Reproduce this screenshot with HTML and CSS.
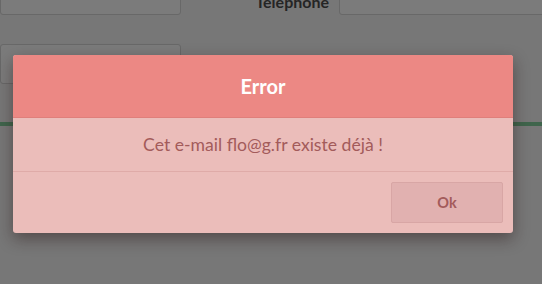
FILE: index.html
```html
<!DOCTYPE html>
<html lang="fr">
<head>
<meta charset="utf-8">
<title>Error</title>
<link rel="stylesheet" href="styles.css">
</head>
<body>
<div class="page">
  <div class="row row-top">
    <div class="input"></div>
    <label class="label">Téléphone</label>
    <div class="input input-right"></div>
  </div>
  <div class="row row-second">
    <div class="input input-second"></div>
  </div>
  <div class="green-line"></div>
</div>
<div class="modal">
  <div class="modal-header">Error</div>
  <div class="modal-body">Cet e-mail flo@g.fr existe déjà !</div>
  <div class="modal-footer">
    <button class="btn">Ok</button>
  </div>
</div>
</body>
</html>
```
FILE: styles.css
```css
html, body {
  margin: 0;
  padding: 0;
  width: 542px;
  height: 284px;
  overflow: hidden;
  background: #777777;
  font-family: Lato, "Open Sans", sans-serif;
}
.page {
  width: 542px;
}
.row {
  display: grid;
  grid-template-columns: 181px 138px 1fr;
  column-gap: 10px;
}
.row-top {
  margin-top: -25px;
  height: 40px;
}
.row-second {
  margin-top: 29px;
  height: 40px;
}
.input {
  box-sizing: border-box;
  height: 40px;
  background: #7b7b7b;
  border: 1px solid #686868;
  border-radius: 3px;
}
.input-right {
  margin-right: -10px;
}
.label {
  font-weight: 700;
  font-size: 16px;
  line-height: 19px;
  color: #252525;
  text-align: right;
  padding-top: 17px;
}
.green-line {
  margin-top: 38px;
  height: 4px;
  background: #3f654c;
}
.modal {
  position: absolute;
  left: 13px;
  top: 55px;
  width: 500px;
  height: 178px;
  border-radius: 3px;
  overflow: hidden;
  background: #ebbdba;
  box-shadow: 0 6px 16px rgba(40, 20, 20, 0.45);
  display: flex;
  flex-direction: column;
}
.modal-header {
  height: 62px;
  background: #ec8884;
  border-bottom: 1px solid #df7f7b;
  color: #ffffff;
  font-weight: 700;
  font-size: 20px;
  display: flex;
  align-items: center;
  justify-content: center;
}
.modal-body {
  height: 53px;
  border-bottom: 1px solid #dfaba8;
  color: #a35b5b;
  font-size: 17.6px;
  display: flex;
  align-items: center;
  justify-content: center;
}
.modal-footer {
  flex: 1;
  display: flex;
  justify-content: flex-end;
  padding: 10px 10px 9px;
}
.btn {
  width: 112px;
  height: 41px;
  background: #e1b1b0;
  border: 1px solid #d8a6a5;
  border-radius: 2px;
  color: #a35b5b;
  font-family: Lato, "Open Sans", sans-serif;
  font-weight: 700;
  font-size: 14.5px;
  padding: 0;
}
```
